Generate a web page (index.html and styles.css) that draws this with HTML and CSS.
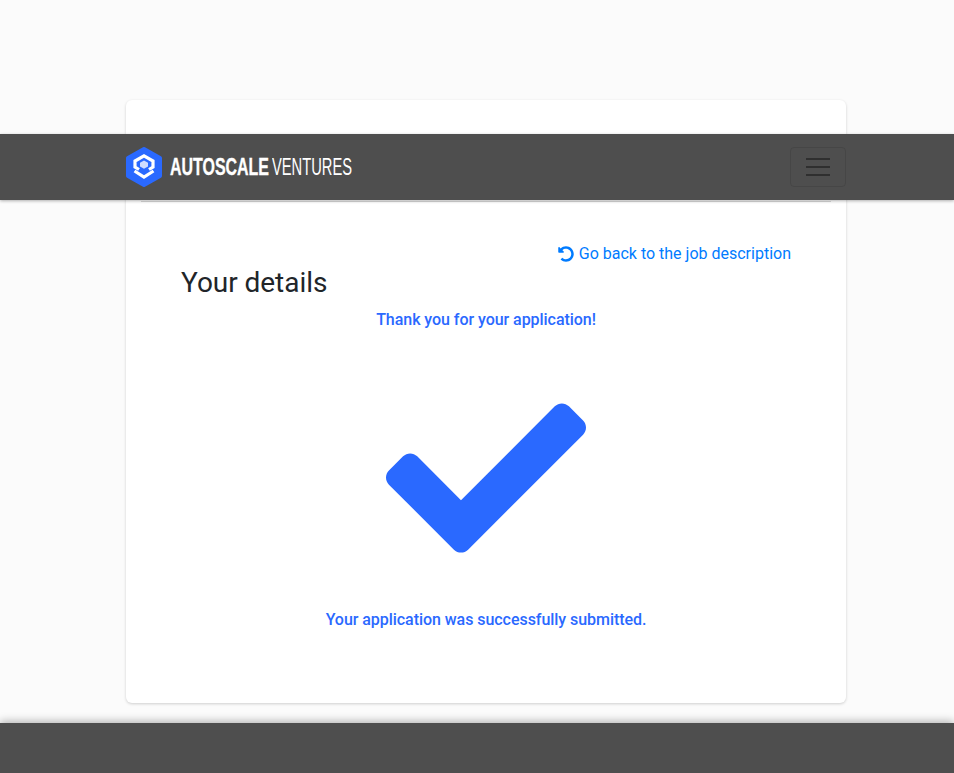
FILE: index.html
```html
<!DOCTYPE html>
<html lang="en">
<head>
<meta charset="utf-8">
<title>Your details</title>
<link rel="stylesheet" href="styles.css">
</head>
<body>
<nav class="navbar">
  <a class="brand" href="#">
    <svg class="brand-logo" viewBox="0 0 36 40" aria-hidden="true">
      <path class="logo-hex" d="M18 2 34 11V29L18 38 2 29V11Z"/>
      <path class="logo-line" d="M13 22.5 9 20V14L18 8.8 27 14V20L23 22.5"/>
      <path class="logo-core" d="M18 13.5 22 15.8V19.4L18 21.7 14 19.4V15.8Z"/>
      <path class="logo-line" d="M8.5 24 18 30 27.5 24"/>
    </svg>
    <span class="brand-text"><span class="brand-strong">AUTOSCALE</span><span class="brand-light">VENTURES</span></span>
  </a>
  <button class="toggler" type="button" aria-label="Menu"><span></span><span></span><span></span></button>
</nav>
<main class="page">
  <section class="card">
    <div class="card-head"></div>
    <div class="card-body">
      <div class="back-row">
        <a class="back" href="#">
          <svg class="back-icon" viewBox="0 0 512 512" aria-hidden="true"><path d="M255.545 8c-66.269.119-126.438 26.233-170.86 68.685L48.971 40.971C33.851 25.851 8 36.559 8 57.941V192c0 13.255 10.745 24 24 24h134.059c21.382 0 32.09-25.851 16.971-40.971l-41.75-41.75c30.864-28.899 70.801-44.907 113.23-45.273 92.398-.798 170.283 73.977 169.484 169.442C423.236 348.009 349.816 424 256 424c-41.127 0-79.997-14.678-110.63-41.556-4.743-4.161-11.906-3.908-16.368.553L89.34 422.659c-4.872 4.872-4.631 12.815.482 17.433C133.798 479.813 192.074 504 256 504c136.966 0 247.999-111.033 248-247.998C504.001 119.193 392.354 7.755 255.545 8z"/></svg>
          Go back to the job description
        </a>
      </div>
      <h2 class="title">Your details</h2>
      <p class="msg msg-top">Thank you for your application!</p>
      <svg class="check" viewBox="0 0 512 512" aria-hidden="true"><path d="M173.898 439.404l-166.4-166.4c-9.997-9.997-9.997-26.206 0-36.204l36.203-36.204c9.997-9.998 26.207-9.998 36.204 0L192 312.69 432.095 72.596c9.997-9.997 26.207-9.997 36.204 0l36.203 36.204c9.997 9.997 9.997 26.206 0 36.204l-294.4 294.401c-9.998 9.997-26.207 9.997-36.204-.001z"/></svg>
      <p class="msg msg-bottom">Your application was successfully submitted.</p>
    </div>
  </section>
</main>
<footer class="footer"></footer>
</body>
</html>
```
FILE: styles.css
```css
* { box-sizing: border-box; }
html, body { margin: 0; height: 100%; }
body {
  background: #fbfbfb;
  color: #212529;
  font-family: Roboto, "Liberation Sans", sans-serif;
  font-size: 16px;
  line-height: 24px;
  display: flex;
  flex-direction: column;
  overflow: hidden;
  position: relative;
}
.navbar {
  position: absolute;
  top: 134px;
  left: 0;
  right: 0;
  height: 66px;
  padding: 0 108px 0 126px;
  background: #4e4e4e;
  box-shadow: 0 1px 3px rgba(0, 0, 0, .3);
  display: flex;
  align-items: center;
  justify-content: space-between;
  z-index: 2;
}
.brand { display: flex; align-items: center; gap: 8px; color: #fff; text-decoration: none; }
.brand-logo { width: 36px; height: 40px; display: block; }
.logo-hex { fill: #2a69ff; stroke: #2a69ff; stroke-width: 4; stroke-linejoin: round; }
.logo-line { fill: none; stroke: #fff; stroke-width: 3.2; }
.logo-core { fill: #cfdcff; }
.brand-text {
  display: flex;
  gap: 4px;
  font-family: "Liberation Sans", sans-serif;
  font-size: 24px;
  line-height: 28px;
  white-space: nowrap;
}
.brand-strong, .brand-light { display: block; transform-origin: left center; }
.brand-strong { width: 98px; font-weight: 700; transform: scaleX(.665); -webkit-text-stroke: .35px #fff; }
.brand-light { width: 80px; font-weight: 400; transform: scaleX(.612); }
.toggler {
  width: 56px;
  height: 40px;
  padding: 0;
  background: transparent;
  border: 1px solid rgba(0, 0, 0, .1);
  border-radius: 4px;
  display: flex;
  flex-direction: column;
  align-items: center;
  justify-content: center;
  gap: 6px;
}
.toggler span { display: block; width: 24px; height: 2px; background: #2f2f2f; }
.page { flex: 1; padding: 100px 108px 0 126px; display: flex; justify-content: center; align-items: flex-start; }
.card {
  width: 720px;
  height: 603px;
  background: #fff;
  border-radius: 6px;
  box-shadow: 0 1px 3px rgba(0, 0, 0, .18);
  padding: 0 15px;
}
.card-head { height: 102px; border-bottom: 1px solid #d9d9d9; }
.card-body { padding: 40px 40px 0; }
.back-row { display: flex; justify-content: flex-end; }
.back { color: #007bff; text-decoration: none; display: flex; align-items: center; gap: 5px; }
.back-icon { width: 16px; height: 16px; fill: currentColor; display: block; }
.title { margin: 0 0 8px; font-size: 28px; line-height: 34px; font-weight: 400; letter-spacing: -.04px; }
.msg { margin: 0; text-align: center; color: #2a69ff; font-weight: 500; letter-spacing: -.05px; }
.check { display: block; width: 200px; height: 200px; margin: 46px auto 30px; fill: #2a69ff; }
.footer {
  height: 50px;
  flex: none;
  background: #4e4e4e;
  box-shadow: 0 -2px 8px rgba(0, 0, 0, .28);
}
```
